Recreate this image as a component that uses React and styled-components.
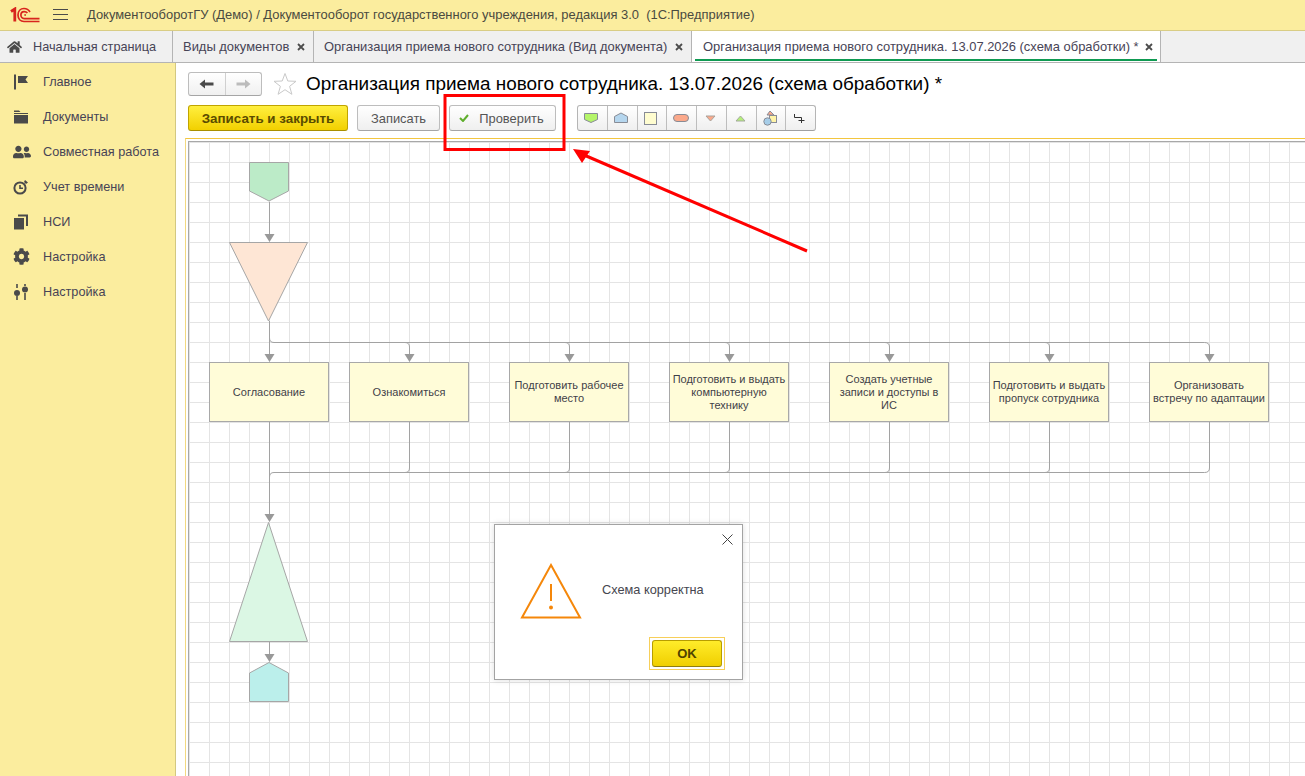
import React from "react";
import styled, { createGlobalStyle } from "styled-components";
import { FaCog, FaUserFriends, FaHome } from "react-icons/fa";

const Global = createGlobalStyle`
  html, body { margin: 0; padding: 0; height: 100%; overflow: hidden; background: #fff; }
  body { font-family: "Liberation Sans", Arial, sans-serif; font-size: 12px; color: #444; }
  #root { height: 100%; }
  * { box-sizing: border-box; }
`;

const Page = styled.div`
  position: relative;
  width: 1305px;
  height: 776px;
  display: flex;
  flex-direction: column;
  overflow: hidden;
`;

const TitleBar = styled.header`
  height: 31px;
  flex: none;
  display: flex;
  align-items: center;
  padding: 0 0 1px 10px;
  background: #fbed9e;
  border-bottom: 1px solid #d9cd85;
`;

const MenuIcon = styled.div`
  width: 15px;
  height: 11px;
  margin-left: 13px;
  margin-right: 19px;
  border-top: 1px solid #4a4a4a;
  border-bottom: 1px solid #4a4a4a;
  position: relative;
  &::after {
    content: "";
    position: absolute;
    left: 0;
    right: 0;
    top: 4px;
    height: 1px;
    background: #4a4a4a;
  }
`;

const AppTitle = styled.span`
  font-size: 12.93px;
  color: #4a4a40;
  white-space: nowrap;
`;

const TabBar = styled.nav`
  height: 32px;
  flex: none;
  display: flex;
  background: #f0f0f0;
  border-bottom: 1px solid #b4b4b4;
`;

const Tab = styled.div`
  position: relative;
  width: ${(p) => p.$width}px;
  flex: none;
  display: flex;
  align-items: center;
  padding-left: ${(p) => p.$pad}px;
  padding-right: ${(p) => (p.$active ? 7 : 8)}px;
  border-right: 1px solid #b4b4b4;
  background: ${(p) => (p.$active ? "#fff" : "transparent")};
  font-size: 12.95px;
  color: #474456;
  white-space: nowrap;
  &::after {
    content: "";
    display: ${(p) => (p.$active ? "block" : "none")};
    position: absolute;
    left: 3px;
    right: 3px;
    bottom: 1px;
    height: 2px;
    background: #0f9a52;
  }
`;

const TabLabel = styled.span`
  flex: 1;
`;

const HomeLabel = styled(TabLabel)`
  font-size: 12.72px;
`;

const HomeGlyph = styled(FaHome)`
  width: 15px;
  height: 14px;
  color: #4a4a4a;
  margin-right: 11px;
`;

const TabClose = styled.span`
  width: 8px;
  height: 8px;
  flex: none;
  display: flex;
`;

const Body = styled.div`
  flex: 1;
  min-height: 0;
  display: flex;
`;

const Sidebar = styled.aside`
  width: 176px;
  flex: none;
  padding-top: 1px;
  background: #fbed9e;
  border-right: 1px solid #d3c880;
`;

const SideItem = styled.div`
  height: 35px;
  display: flex;
  align-items: center;
  font-size: 12.7px;
  color: #474456;
`;

const SideIconBox = styled.span`
  width: 43px;
  padding-left: 13px;
  flex: none;
  display: flex;
  align-items: center;
  color: #4a4a4a;
`;

const Main = styled.main`
  flex: 1;
  min-width: 0;
  display: flex;
  flex-direction: column;
  padding: 9px 0 0 12px;
`;

const HeaderRow = styled.div`
  height: 23px;
  flex: none;
  display: flex;
  align-items: center;
`;

const NavGroup = styled.div`
  width: 74px;
  height: 24px;
  flex: none;
  display: flex;
  background: linear-gradient(#fff, #f0f0f0);
  border: 1px solid #bdbdbd;
  border-bottom-color: #a5a5a5;
  border-radius: 3px;
`;

const NavCell = styled.span`
  flex: 1;
  display: flex;
  align-items: center;
  justify-content: center;
  & + & { border-left: 1px solid #d0d0d0; }
`;

const StarWrap = styled.span`
  margin-left: 11px;
  width: 24px;
  height: 24px;
  flex: none;
  display: flex;
`;

const Title = styled.h1`
  margin: 0 0 0 9px;
  font-size: 18.9px;
  font-weight: 400;
  color: #000;
  white-space: nowrap;
`;

const Toolbar = styled.div`
  height: 26px;
  margin-top: 10px;
  flex: none;
  display: flex;
  align-items: stretch;
`;

const PrimaryButton = styled.button`
  width: 160px;
  margin: 0;
  padding: 0;
  font: bold 13.4px "Liberation Sans", Arial, sans-serif;
  color: #5a4c00;
  background: linear-gradient(#ffef3f, #f2d000);
  border: 1px solid #c0a400;
  border-bottom-color: #a88f00;
  border-radius: 3px;
`;

const Button = styled.button`
  width: ${(p) => p.$width}px;
  margin: 0 0 0 ${(p) => p.$gap}px;
  padding: 0;
  display: flex;
  align-items: center;
  justify-content: center;
  font: 12.9px "Liberation Sans", Arial, sans-serif;
  color: #555;
  background: linear-gradient(#fff, #efefef);
  border: 1px solid #bdbdbd;
  border-bottom-color: #a5a5a5;
  border-radius: 3px;
`;

const CheckGlyph = styled.svg`
  width: 10px;
  height: 8px;
  margin-right: 10px;
  margin-left: -2px;
`;

const ShapeGroup = styled.div`
  margin-left: 21px;
  width: 239px;
  display: flex;
  background: linear-gradient(#fff, #efefef);
  border: 1px solid #b5b5b5;
  border-bottom-color: #a0a0a0;
  border-radius: 3px;
`;

const ShapeCell = styled.span`
  flex: 1;
  min-width: 0;
  padding-right: 2px;
  display: flex;
  align-items: center;
  justify-content: center;
  & + & { border-left: 1px solid #bdbdbd; }
`;

const CanvasFrame = styled.div`
  flex: 1;
  min-height: 0;
  margin: 7px 0 0 -3px;
  padding: 2px 0 0 2px;
  border-top: 1px solid #f3c63f;
  border-left: 1px solid #f3d980;
`;

const Canvas = styled.div`
  position: relative;
  height: 100%;
  overflow: hidden;
  background-color: #fff;
  background-image:
    linear-gradient(to right, #e4e4e4 1px, transparent 1px),
    linear-gradient(to bottom, #e4e4e4 1px, transparent 1px);
  background-size: 20px 20px;
  background-position: 0 0;
  border-top: 1px solid #a8a8a8;
  border-left: 1px solid #a8a8a8;
`;

const DiagramSvg = styled.svg`
  position: absolute;
  left: 0;
  top: 0;
`;

const ProcessNode = styled.div`
  position: absolute;
  left: ${(p) => p.$x - 189}px;
  top: ${362 - 142}px;
  width: 120px;
  height: 60px;
  display: flex;
  align-items: center;
  justify-content: center;
  padding: 0 2px;
  text-align: center;
  white-space: pre-line;
  font-size: 11px;
  line-height: 13px;
  color: #3f3f48;
  background: #fffcd8;
  border: 1px solid #a8a8a8;
`;

const Dialog = styled.div`
  position: absolute;
  left: 494px;
  top: 524px;
  width: 249px;
  height: 156px;
  background: #fff;
  border: 1px solid #a3a3a3;
  box-shadow: 0 0 6px rgba(0, 0, 0, 0.14);
`;

const DialogClose = styled.svg`
  position: absolute;
  right: 9px;
  top: 9px;
  width: 11px;
  height: 11px;
`;

const DialogBody = styled.div`
  display: flex;
  align-items: center;
  height: 111px;
  padding: 20px 0 0 25px;
`;

const DialogText = styled.span`
  margin-left: 20px;
  margin-top: -2px;
  font-size: 12.75px;
  color: #46464f;
`;

const WarnGlyph = styled.svg`
  width: 62px;
  height: 56px;
  flex: none;
`;

const DialogFooter = styled.div`
  display: flex;
  justify-content: flex-end;
  padding: 1px 17px 0 0;
`;

const OkFrame = styled.div`
  width: 76px;
  height: 33px;
  padding: 2px;
  border: 1px solid #f7cf5a;
`;

const OkButton = styled.button`
  width: 100%;
  height: 100%;
  margin: 0;
  padding: 0;
  font: bold 13px "Liberation Sans", Arial, sans-serif;
  color: #4f4300;
  background: linear-gradient(#ffec2a, #f0cf00);
  border: 1px solid #b79d00;
  border-bottom-color: #8f7d10;
  border-radius: 3px;
`;

const Annotation = styled.svg`
  position: absolute;
  left: 0;
  top: 0;
  pointer-events: none;
`;

const Close = () => (
  <TabClose>
    <svg width="8" height="8" viewBox="0 0 8 8">
      <path d="M1 1 L7 7 M7 1 L1 7" stroke="#4c4c4c" strokeWidth="1.8" />
    </svg>
  </TabClose>
);

const Logo = () => (
  <svg width="30" height="16" viewBox="0 0 30 16">
    <g fill="none" stroke="#d8251d" strokeWidth="1.7">
      <path d="M1 4.5 L4.8 2 V14.5" strokeWidth="2.8" />
      <path d="M20 5 C18.5 2.5 16 1.5 14 1.5 C10.5 1.5 8 4.3 8 8 C8 11.7 10.5 14.5 14 14.5 H29.5" />
      <path d="M17.4 6 C16.6 5 15.4 4.6 14.2 4.6 C12.2 4.6 10.9 6.2 10.9 8 C10.9 9.8 12.2 11.6 14.2 11.6 H29.5" />
      <path d="M14.3 8 H16" />
    </g>
  </svg>
);

const FlagIcon = () => (
  <svg width="16" height="16" viewBox="0 0 16 16">
    <path d="M1 0.5 H3 V15.5 H1 Z M5 2 H15 L12.5 5.5 L15 9 H5 Z" fill="#4a4a4a" />
  </svg>
);
const FolderIcon = () => (
  <svg width="16" height="14" viewBox="0 0 16 14">
    <path d="M1 2 V0.5 H6 L7.5 2 Z M1 3 H15 V4 H1 Z M1 5 H15 V13.5 H1 Z" fill="#4a4a4a" />
  </svg>
);
const TimerIcon = () => (
  <svg width="16" height="16" viewBox="0 0 16 16">
    <circle cx="7" cy="9" r="5.6" fill="none" stroke="#4a4a4a" strokeWidth="2" />
    <path d="M7 6 V9.3 H10" fill="none" stroke="#4a4a4a" strokeWidth="1.6" />
    <path d="M12 1 L15 3.5 L13 5 L11 3 Z" fill="#4a4a4a" />
  </svg>
);
const CopyIcon = () => (
  <svg width="16" height="16" viewBox="0 0 16 16">
    <path d="M1 4 H11 V15.5 H1 Z" fill="#4a4a4a" />
    <path d="M5 0.5 H15 V12 H13 V2.5 H5 Z" fill="#4a4a4a" />
  </svg>
);
const SlidersIcon = () => (
  <svg width="16" height="16" viewBox="0 0 16 16">
    <path d="M4 0 V4 M4 12 V16 M12 0 V2 M12 9 V16" stroke="#4a4a4a" strokeWidth="1.6" />
    <circle cx="4" cy="9" r="3" fill="#4a4a4a" />
    <circle cx="12" cy="5.5" r="3" fill="#4a4a4a" />
  </svg>
);

const menu = [
  ["Главное", <FlagIcon />],
  ["Документы", <FolderIcon />],
  ["Совместная работа", <FaUserFriends size={18} />],
  ["Учет времени", <TimerIcon />],
  ["НСИ", <CopyIcon />],
  ["Настройка", <FaCog size={17} />],
  ["Настройка", <SlidersIcon />],
];

const Arrow = ({ left, color }) => (
  <svg width="15" height="10" viewBox="0 0 15 10">
    <path
      d={left ? "M14.5 3.5 H6 V0.5 L0.5 5 L6 9.5 V6.5 H14.5 Z" : "M0.5 3.5 H9 V0.5 L14.5 5 L9 9.5 V6.5 H0.5 Z"}
      fill={color}
    />
  </svg>
);

const stroke = "#888c96";
const shapeIcons = [
  <svg width="16" height="12" viewBox="0 0 16 12"><path d="M1.5 1.5 H14.5 V7.5 L8 10.5 L1.5 7.5 Z" fill="#b5f56a" stroke={stroke} /></svg>,
  <svg width="16" height="12" viewBox="0 0 16 12"><path d="M1.5 10.5 V4.5 L8 1 L14.5 4.5 V10.5 Z" fill="#b5d6ee" stroke={stroke} /></svg>,
  <svg width="15" height="15" viewBox="0 0 15 15"><rect x="1.5" y="1.5" width="12" height="12" fill="#fffdd0" stroke={stroke} /></svg>,
  <svg width="18" height="10" viewBox="0 0 18 10"><rect x="1.5" y="1.5" width="15" height="7" rx="3.5" fill="#fba98b" stroke={stroke} /></svg>,
  <svg width="11" height="7" viewBox="0 0 11 7"><path d="M1 1 H10 L5.5 6 Z" fill="#fba98b" stroke="#a9a39c" /></svg>,
  <svg width="11" height="7" viewBox="0 0 11 7"><path d="M1 6 H10 L5.5 1 Z" fill="#b5ef7a" stroke="#a3aa9c" /></svg>,
  <svg width="14" height="17" viewBox="0 0 14 17">
    <path d="M4 5 L7 1 L11 5 Z" fill="#fba98b" stroke={stroke} />
    <rect x="6.5" y="5.5" width="7" height="7" fill="#fff4a8" stroke={stroke} />
    <circle cx="4.5" cy="11.5" r="3.7" fill="#a6cde8" stroke={stroke} />
  </svg>,
  <svg width="12" height="11" viewBox="0 0 12 11"><path d="M0.5 1 V4.5 H7.5 V10 M4.5 7.5 H10.5" fill="none" stroke="#333" strokeWidth="1" /></svg>,
];

const nodes = [
  [209, "Согласование"],
  [349, "Ознакомиться"],
  [509, "Подготовить рабочее место"],
  [669, "Подготовить и выдать компьютерную технику"],
  [829, "Создать учетные записи и доступы в ИС"],
  [989, "Подготовить и выдать пропуск сотрудника"],
  [1149, "Организовать\nвстречу по адаптации"],
];

const Head = ({ x, y }) => (
  <path d={`M${x - 4.5} ${y - 8} H${x + 5.5} L${x + 0.5} ${y} Z`} fill="#999" />
);

const line = "#a2a2a2";
const shapeLine = "#a6a6a6";
const dropsX = [409, 569, 729, 889, 1049];

const Diagram = () => (
  <DiagramSvg width="1116" height="634" viewBox="189 142 1116 634">
    <path d="M269.5 202 V235 M269.5 321 V355 M269.5 422 V515 M269.5 642 V655" fill="none" stroke={line} />
    <path d="M269.5 338 Q269.5 342.5 274 342.5 H1204.5 Q1209.5 342.5 1209.5 347 V355" fill="none" stroke={line} />
    {dropsX.map((x) => (
      <path key={x} d={`M${x - 4} 342.5 Q${x + 0.5} 342.5 ${x + 0.5} 347 V355`} fill="none" stroke={line} />
    ))}
    {dropsX.map((x) => (
      <path key={x} d={`M${x + 0.5} 422 V468 Q${x + 0.5} 472.5 ${x - 4} 472.5`} fill="none" stroke={line} />
    ))}
    <path d="M269.5 477 Q269.5 472.5 274 472.5 H1204.5 Q1209.5 472.5 1209.5 468 V422" fill="none" stroke={line} />
    {[269, 409, 569, 729, 889, 1049, 1209].map((x) => (
      <Head key={x} x={x} y={362} />
    ))}
    <Head x={269} y={242} />
    <Head x={269} y={522} />
    <Head x={269} y={662} />
    <path d="M249.5 162.5 H288.5 V191 L269 201 L249.5 191 Z" fill="#bcebc8" stroke={shapeLine} />
    <path d="M229.5 242.5 H307.5 L268.5 321 Z" fill="#fee6d5" stroke={shapeLine} />
    <path d="M268.5 522.5 L307.5 641.5 H229.5 Z" fill="#dbf7e4" stroke={shapeLine} />
    <path d="M269 662.5 L288.5 673 V701.5 H249.5 V673 Z" fill="#bbefeb" stroke={shapeLine} />
  </DiagramSvg>
);

export default function App() {
  return (
    <Page>
      <Global />
      <TitleBar>
        <Logo />
        <MenuIcon />
        <AppTitle>ДокументооборотГУ (Демо) / Документооборот государственного учреждения, редакция 3.0&nbsp; (1С:Предприятие)</AppTitle>
      </TitleBar>
      <TabBar>
        <Tab $width={173} $pad={7}>
          <HomeGlyph />
          <HomeLabel>Начальная страница</HomeLabel>
        </Tab>
        <Tab $width={141} $pad={10}>
          <TabLabel>Виды документов</TabLabel>
          <Close />
        </Tab>
        <Tab $width={378} $pad={10}>
          <TabLabel>Организация приема нового сотрудника (Вид документа)</TabLabel>
          <Close />
        </Tab>
        <Tab $width={469} $pad={11} $active>
          <TabLabel>Организация приема нового сотрудника. 13.07.2026 (схема обработки) *</TabLabel>
          <Close />
        </Tab>
      </TabBar>
      <Body>
        <Sidebar>
          {menu.map(([label, icon], i) => (
            <SideItem key={i}>
              <SideIconBox>{icon}</SideIconBox>
              {label}
            </SideItem>
          ))}
        </Sidebar>
        <Main>
          <HeaderRow>
            <NavGroup>
              <NavCell><Arrow left color="#4a4a4a" /></NavCell>
              <NavCell><Arrow color="#bcbcbc" /></NavCell>
            </NavGroup>
            <StarWrap>
              <svg width="24" height="24" viewBox="0 0 24 24">
                <path d="M12 1.5 L14.8 9 L23 9.3 L16.6 14.3 L18.9 22.3 L12 17.7 L5.1 22.3 L7.4 14.3 L1 9.3 L9.2 9 Z" fill="#fff" stroke="#c9c9c9" />
              </svg>
            </StarWrap>
            <Title>Организация приема нового сотрудника. 13.07.2026 (схема обработки) *</Title>
          </HeaderRow>
          <Toolbar>
            <PrimaryButton>Записать и закрыть</PrimaryButton>
            <Button $width={83} $gap={9}>Записать</Button>
            <Button $width={107} $gap={9}>
              <CheckGlyph viewBox="0 0 10 8">
                <path d="M1 4 L4 7 L9 1" fill="none" stroke="#5fae2c" strokeWidth="2" />
              </CheckGlyph>
              Проверить
            </Button>
            <ShapeGroup>
              {shapeIcons.map((icon, i) => (
                <ShapeCell key={i}>{icon}</ShapeCell>
              ))}
            </ShapeGroup>
          </Toolbar>
          <CanvasFrame>
            <Canvas>
              <Diagram />
              {nodes.map(([x, text]) => (
                <ProcessNode key={x} $x={x}>{text}</ProcessNode>
              ))}
            </Canvas>
          </CanvasFrame>
        </Main>
      </Body>
      <Dialog>
        <DialogClose viewBox="0 0 11 11">
          <path d="M0.5 0.5 L10.5 10.5 M10.5 0.5 L0.5 10.5" stroke="#444" strokeWidth="1" />
        </DialogClose>
        <DialogBody>
          <WarnGlyph viewBox="0 0 62 56">
            <path d="M31 2 L60 54.5 H2 Z" fill="none" stroke="#f5870a" strokeWidth="2" />
            <path d="M31 21 V38" stroke="#f5870a" strokeWidth="2" />
            <circle cx="31" cy="44.5" r="2" fill="#f5870a" />
          </WarnGlyph>
          <DialogText>Схема корректна</DialogText>
        </DialogBody>
        <DialogFooter>
          <OkFrame>
            <OkButton>OK</OkButton>
          </OkFrame>
        </DialogFooter>
      </Dialog>
      <Annotation width="1305" height="776" viewBox="0 0 1305 776">
        <rect x="445" y="95.5" width="119" height="54" fill="none" stroke="#ff0000" strokeWidth="3" />
        <path d="M807 251 L584 155" stroke="#ff0000" strokeWidth="3" fill="none" />
        <path d="M573 149 L590 151 L582 163 Z" fill="#ff0000" />
      </Annotation>
    </Page>
  );
}
